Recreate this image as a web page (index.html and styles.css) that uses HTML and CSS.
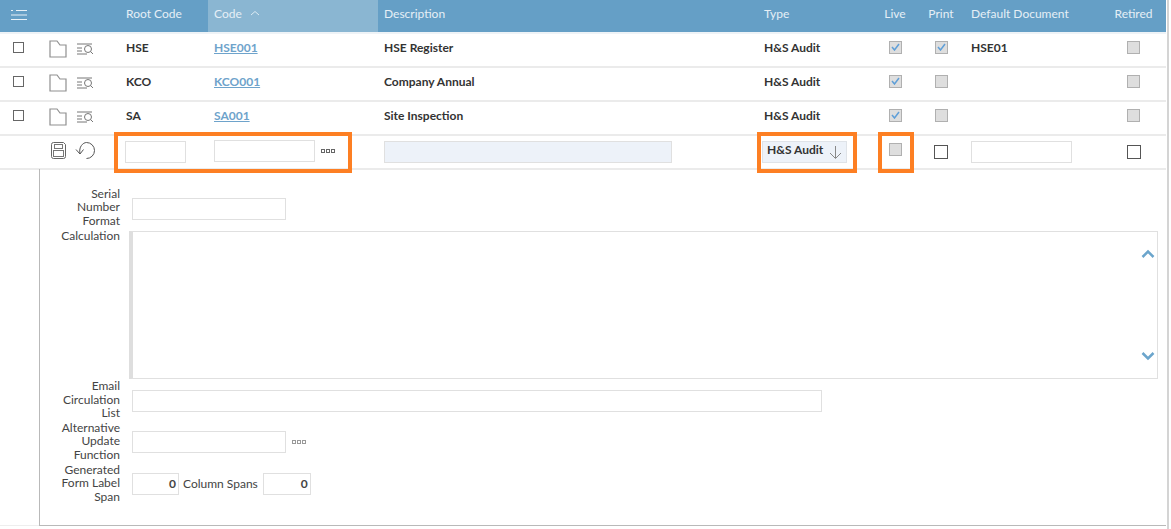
FILE: index.html
```html
<!DOCTYPE html>
<html lang="en">
<head>
    <meta charset="UTF-8">
    <meta name="viewport" content="width=device-width, initial-scale=1.0">
    <title>Forms</title>
    <link rel="stylesheet" href="styles.css">
</head>
<body>
    <div class="page">
        <div class="row head">
            <div class="tools">
                <svg class="menu-icon" width="18" height="12" viewBox="0 0 18 12"><path d="M1 1.500h2M6 1.500h11M1 6h16M1 10.500h16" stroke="#fff" stroke-opacity=".85" fill="none"/></svg>
            </div>
            <div class="cell">Root Code</div>
            <div class="cell sorted">Code <svg class="sort-icon" width="10" height="6" viewBox="0 0 10 6"><path d="M1 5l4-3.500L9 5" stroke="#dcebf4" fill="none"/></svg></div>
            <div class="cell">Description</div>
            <div class="cell">Type</div>
            <div class="cell mid">Live</div>
            <div class="cell mid">Print</div>
            <div class="cell">Default Document</div>
            <div class="cell mid">Retired</div>
        </div>

        <div class="row item">
            <div class="tools">
                <span class="select"></span>
                <svg class="folder" width="18" height="18" viewBox="0 0 18 18"><path d="M1 17V1h7l3 4h6v12z" stroke="#8f8f8f" stroke-width="1.200" fill="none"/></svg>
                <svg class="finder" width="18" height="12" viewBox="0 0 18 12"><path d="M1 1h15M1 5h5M1 8h5M1 11h10" stroke="#777" fill="none"/><circle cx="12" cy="6" r="3.500" stroke="#777" fill="none"/><path d="M14.500 8.500l2.500 2.500" stroke="#777" fill="none"/></svg>
            </div>
            <div class="cell">HSE</div>
            <div class="cell"><a class="link" href="#">HSE001</a></div>
            <div class="cell">HSE Register</div>
            <div class="cell">H&amp;S Audit</div>
            <div class="cell mid"><span class="check on"><svg width="9" height="8" viewBox="0 0 9 8"><path d="M1 4l2.500 3L8 1" stroke="#5f9fd8" stroke-width="1.500" fill="none"/></svg></span></div>
            <div class="cell mid"><span class="check on"><svg width="9" height="8" viewBox="0 0 9 8"><path d="M1 4l2.500 3L8 1" stroke="#5f9fd8" stroke-width="1.500" fill="none"/></svg></span></div>
            <div class="cell">HSE01</div>
            <div class="cell mid"><span class="check"></span></div>
        </div>

        <div class="row item">
            <div class="tools">
                <span class="select"></span>
                <svg class="folder" width="18" height="18" viewBox="0 0 18 18"><path d="M1 17V1h7l3 4h6v12z" stroke="#8f8f8f" stroke-width="1.200" fill="none"/></svg>
                <svg class="finder" width="18" height="12" viewBox="0 0 18 12"><path d="M1 1h15M1 5h5M1 8h5M1 11h10" stroke="#777" fill="none"/><circle cx="12" cy="6" r="3.500" stroke="#777" fill="none"/><path d="M14.500 8.500l2.500 2.500" stroke="#777" fill="none"/></svg>
            </div>
            <div class="cell">KCO</div>
            <div class="cell"><a class="link" href="#">KCO001</a></div>
            <div class="cell">Company Annual</div>
            <div class="cell">H&amp;S Audit</div>
            <div class="cell mid"><span class="check on"><svg width="9" height="8" viewBox="0 0 9 8"><path d="M1 4l2.500 3L8 1" stroke="#5f9fd8" stroke-width="1.500" fill="none"/></svg></span></div>
            <div class="cell mid"><span class="check"></span></div>
            <div class="cell"></div>
            <div class="cell mid"><span class="check"></span></div>
        </div>

        <div class="row item">
            <div class="tools">
                <span class="select"></span>
                <svg class="folder" width="18" height="18" viewBox="0 0 18 18"><path d="M1 17V1h7l3 4h6v12z" stroke="#8f8f8f" stroke-width="1.200" fill="none"/></svg>
                <svg class="finder" width="18" height="12" viewBox="0 0 18 12"><path d="M1 1h15M1 5h5M1 8h5M1 11h10" stroke="#777" fill="none"/><circle cx="12" cy="6" r="3.500" stroke="#777" fill="none"/><path d="M14.500 8.500l2.500 2.500" stroke="#777" fill="none"/></svg>
            </div>
            <div class="cell">SA</div>
            <div class="cell"><a class="link" href="#">SA001</a></div>
            <div class="cell">Site Inspection</div>
            <div class="cell">H&amp;S Audit</div>
            <div class="cell mid"><span class="check on"><svg width="9" height="8" viewBox="0 0 9 8"><path d="M1 4l2.500 3L8 1" stroke="#5f9fd8" stroke-width="1.500" fill="none"/></svg></span></div>
            <div class="cell mid"><span class="check"></span></div>
            <div class="cell"></div>
            <div class="cell mid"><span class="check"></span></div>
        </div>

        <div class="row item edit">
            <div class="tools edit-tools">
                <svg class="save" width="15" height="17" viewBox="0 0 15 17"><path d="M2.500.5h10l2 2v12a2 2 0 0 1-2 2h-10a2 2 0 0 1-2-2v-12a2 2 0 0 1 2-2z" stroke="#666" fill="none"/><rect x="3.500" y="2.500" width="8" height="4" stroke="#777" fill="none"/><rect x="2.500" y="8.500" width="10" height="6" stroke="#777" fill="none"/></svg>
                <svg class="undo" width="21" height="18" viewBox="0 0 21 18"><path d="M5 11.500C3.500 5 8 .5 11.500 .5a8 8 0 0 1 0 16" stroke="#555" fill="none"/><path d="M1 7.500l4 4.500 3.500-4.500" stroke="#555" fill="none"/></svg>
            </div>
            <div class="cell"><span class="field root"></span></div>
            <div class="cell"><span class="field code"></span><span class="dots"><i></i><i></i><i></i></span></div>
            <div class="cell"><span class="field desc"></span></div>
            <div class="cell"><span class="select-box">H&amp;S Audit<svg width="13" height="13" viewBox="0 0 13 13"><path d="M6.500 0v12M1 7l5.500 5.500L12 7" stroke="#888" fill="none"/></svg></span></div>
            <div class="cell mid raised"><span class="check"></span></div>
            <div class="cell mid"><span class="check blank"></span></div>
            <div class="cell"><span class="field doc"></span></div>
            <div class="cell mid"><span class="check blank"></span></div>
        </div>

        <div class="detail">
            <div class="line line-serial">
                <label class="label">Serial Number Format</label>
                <span class="field short"></span>
            </div>
            <div class="line line-calc">
                <label class="label">Calculation</label>
                <div class="calc">
                    <svg width="14" height="9" viewBox="0 0 14 9"><path d="M1.500 8L7 2.500 12.500 8" stroke="#6ba5cc" stroke-width="2.500" fill="none"/></svg>
                    <svg width="14" height="9" viewBox="0 0 14 9"><path d="M1.500 1L7 6.500 12.500 1" stroke="#6ba5cc" stroke-width="2.500" fill="none"/></svg>
                </div>
            </div>
            <div class="line">
                <label class="label">Email Circulation List</label>
                <span class="field long"></span>
            </div>
            <div class="line line-alt">
                <label class="label">Alternative Update Function</label>
                <span class="field short"></span>
                <span class="dots faint"><i></i><i></i><i></i></span>
            </div>
            <div class="line line-span">
                <label class="label">Generated Form Label Span</label>
                <span class="field num">0</span>
                <span class="inline-label">Column Spans</span>
                <span class="field num">0</span>
            </div>
        </div>
        <div class="base"></div>

        <div class="mark mark-code"></div>
        <div class="mark mark-type"></div>
        <div class="mark mark-live"></div>
    </div>
</body>
</html>
```
FILE: styles.css
```css
* {
    box-sizing: border-box;
}
html, body {
    height: 100%;
}
body {
    margin: 0;
    background-color: #fff;
    color: #333;
    font-family: Lato, "Open Sans", sans-serif;
    font-size: 12px;
    overflow: hidden;
}
.page {
    position: relative;
    width: 1169px;
    height: 529px;
    border-right: 2px solid #d4d4d4;
}
.row {
    display: grid;
    grid-template-columns: 120px 88px 170px 380px 114px 46px 46px 137px 65px;
    width: 1166px;
}
.head {
    height: 34px;
    color: #e6eff6;
    background-color: #659fc6;
    border-bottom: 2px solid #eef3f7;
}
.item {
    height: 34px;
    border-bottom: 2px solid #ebebeb;
    font-weight: 700;
}
.cell {
    display: flex;
    align-items: center;
    padding-left: 6px;
    min-width: 0;
}
.row > .cell:nth-child(8) {
    padding-left: 7px;
}
.head .cell {
    padding-bottom: 6px;
}
.item .cell {
    padding-bottom: 6px;
}
.item.edit .cell {
    padding-bottom: 0;
}
.mid {
    justify-content: center;
    padding-left: 0;
}
.sorted {
    background-color: #8ab6d2;
}
.tools {
    display: flex;
    align-items: center;
}
.menu-icon {
    margin: 0 0 2px 10px;
}
.sort-icon {
    margin-left: 8px;
}
.select {
    width: 11px;
    height: 11px;
    margin: 0 0 6px 13px;
    border: 1.5px solid #666;
}
.folder {
    margin: 0 0 2px 25px;
}
.finder {
    margin: 0 0 3px 9px;
}
.link {
    color: #6ea3cb;
}
.check {
    display: flex;
    align-items: center;
    justify-content: center;
    width: 13px;
    height: 13px;
    background-color: #dedede;
    border: 1px solid #b0b0b0;
}
.check.blank {
    width: 14px;
    height: 14px;
    background-color: #fff;
    border: 1.5px solid #555;
}
.edit-tools {
    padding-left: 51px;
}
.save {
    margin-bottom: 3px;
}
.undo {
    margin: 0 0 2px 9px;
}
.item.edit .raised {
    padding-bottom: 5px;
}
.field {
    display: block;
    height: 22px;
    border: 1px solid #e0e0e0;
    background-color: #fff;
}
.root {
    width: 61px;
    margin-left: -1px;
}
.code {
    width: 101px;
    margin-bottom: 2px;
}
.desc {
    width: 288px;
    background-color: #edf2f9;
}
.doc {
    width: 101px;
}
.dots {
    display: flex;
    gap: 1px;
    margin: 0 0 3px 6px;
}
.dots i {
    width: 4px;
    height: 4px;
    border: 1px solid #666;
}
.dots.faint i {
    border-color: #999;
}
.select-box {
    display: flex;
    justify-content: space-between;
    width: 85px;
    height: 22px;
    margin-left: -2px;
    padding: 0 4px 0 4px;
    background-color: #edf2f9;
    border: 1px solid #dfe3e8;
}
.select-box svg {
    margin-top: 4px;
}
.detail {
    width: 1127px;
    height: 357px;
    margin: -1px 0 0 39px;
    padding-top: 17.500px;
    border-left: 1px solid #b9b9b9;
    border-bottom: 1px solid #b9b9b9;
    color: #444;
}
.base {
    width: 39px;
    height: 1px;
    margin-top: -1px;
    background-color: #eee;
}
.line {
    display: flex;
    align-items: flex-start;
}
.line .field {
    margin-top: 10.500px;
}
.line-serial .field {
    margin-top: 11px;
}
.line .dots {
    margin: 19px 0 0 6px;
}
.line-calc {
    height: 151.500px;
    margin-top: 0.500px;
}
.line-calc .label {
    margin-top: 1.500px;
}
.line-alt {
    margin-top: 1px;
}
.line-span {
    margin-top: 1.500px;
}
.label {
    flex: none;
    width: 60px;
    margin: 0 12px 0 20px;
    text-align: right;
    line-height: 13.500px;
}
.short {
    width: 154px;
}
.long {
    width: 690px;
}
.num {
    width: 47px;
    padding-right: 2px;
    text-align: right;
    line-height: 20px;
    font-weight: 700;
}
.num + .inline-label + .num {
    width: 48px;
}
.inline-label {
    margin: 11.500px 5px 0 4px;
    line-height: 20px;
}
.calc {
    display: flex;
    flex-direction: column;
    justify-content: space-between;
    align-items: flex-end;
    width: 1029px;
    height: 148px;
    margin: 3px 0 0 -3px;
    padding: 17px 2px 17px 0;
    border: 1px solid #e0e0e0;
    border-left: 4px solid #dedede;
}
/* orange annotation boxes laid over the edit row */
.mark {
    position: absolute;
    top: 132px;
    height: 41px;
    border: 4px solid #fd7f23;
}
.mark-code {
    left: 114px;
    width: 238px;
}
.mark-type {
    left: 757px;
    width: 100px;
}
.mark-live {
    left: 878px;
    width: 36px;
}
```
